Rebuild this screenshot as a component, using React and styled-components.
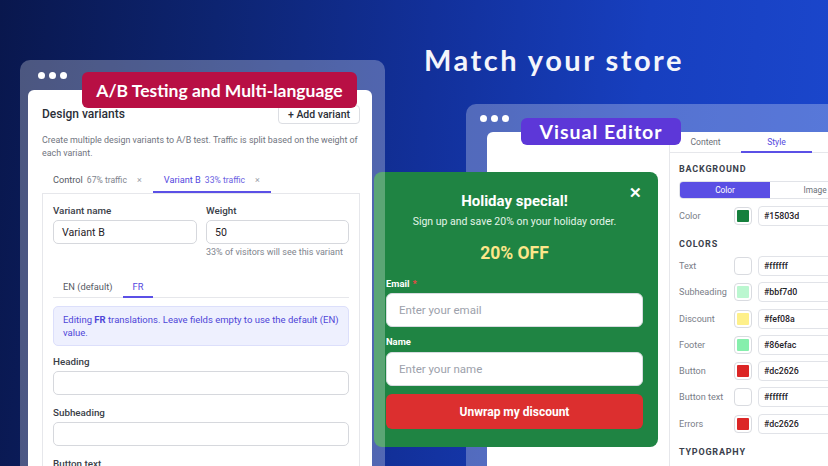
import React from "react";
import styled, { createGlobalStyle } from "styled-components";

const Global = createGlobalStyle`
  * { box-sizing: border-box; }
  html, body { margin: 0; padding: 0; }
  body { width: 828px; height: 466px; overflow: hidden; font-family: Roboto, "Liberation Sans", sans-serif; }
`;

const Stage = styled.div`
  position: relative;
  width: 828px;
  height: 466px;
  overflow: hidden;
  background: linear-gradient(95deg, #09174d 0%, #0d2471 25%, #12309a 50%, #173fbf 75%, #1b47cd 100%);
`;

const Title = styled.h1`
  position: absolute;
  left: 424px;
  top: 40px;
  margin: 0;
  color: #f4f5fb;
  font-family: Lato, "Noto Sans", sans-serif;
  font-weight: 700;
  font-size: 29px;
  line-height: 40px;
  letter-spacing: 2.5px;
  white-space: nowrap;
`;

const Frame = styled.div`
  position: absolute;
  left: ${(p) => p.$left}px;
  top: ${(p) => p.$top}px;
  width: ${(p) => p.$width}px;
  height: ${(p) => p.$height}px;
  border-radius: 10px;
  background: rgba(255, 255, 255, 0.27);
  padding: ${(p) => p.$pad};
  display: flex;
  flex-direction: column;
  z-index: ${(p) => p.$z};
`;

const Dots = styled.div`
  display: flex;
  gap: ${(p) => p.$gap}px;
  height: ${(p) => p.$h}px;
  align-items: center;
  padding-left: ${(p) => p.$pl}px;
  span {
    width: ${(p) => p.$d}px;
    height: ${(p) => p.$d}px;
    border-radius: 50%;
    background: #fff;
  }
`;

const WhiteBody = styled.div`
  flex: 1;
  background: #fff;
  border-radius: 6px 6px 0 0;
  overflow: hidden;
  margin-left: ${(p) => p.$ml}px;
  display: ${(p) => (p.$row ? "flex" : "block")};
`;

const Badge = styled.div`
  position: absolute;
  left: ${(p) => p.$left}px;
  top: ${(p) => p.$top}px;
  width: ${(p) => p.$width}px;
  height: ${(p) => p.$height}px;
  background: ${(p) => p.$bg};
  border-radius: 6px;
  color: #fff;
  font-family: Lato, "Noto Sans", sans-serif;
  font-weight: 700;
  font-size: ${(p) => p.$fs}px;
  letter-spacing: ${(p) => p.$ls}px;
  white-space: nowrap;
  display: flex;
  align-items: center;
  justify-content: center;
  z-index: 10;
`;

/* ---------- Left panel ---------- */
const Panel = styled.div`
  padding: 14px 13px 0 14px;
`;

const HeaderRow = styled.div`
  display: flex;
  justify-content: space-between;
  align-items: center;
  height: 20px;
`;

const PanelTitle = styled.div`
  font-size: 12px;
  font-weight: 500;
  color: #2b2f38;
`;

const GhostButton = styled.div`
  height: 19px;
  padding: 0 9px;
  border: 1px solid #dcdee3;
  border-radius: 4px;
  font-size: 10.5px;
  font-weight: 500;
  color: #2b2f38;
  display: flex;
  align-items: center;
  margin-right: -1px;
`;

const Desc = styled.p`
  margin: 10px -5px 0 0;
  font-size: 8.9px;
  line-height: 12.5px;
  color: #70747e;
`;

const Tabs = styled.div`
  display: flex;
  margin-top: 9px;
  height: 25px;
`;

const Tab = styled.div`
  display: flex;
  align-items: center;
  gap: 4px;
  padding: 0 11px;
  font-size: 9.2px;
  color: ${(p) => (p.$active ? "#5548e0" : "#565a64")};
  border-bottom: 2px solid ${(p) => (p.$active ? "#5b50e6" : "transparent")};
  small {
    font-size: 8.6px;
    color: ${(p) => (p.$active ? "#6a60e2" : "#80848d")};
  }
  i {
    font-style: normal;
    font-size: 9px;
    color: #9a9ea7;
    margin-left: 6px;
  }
`;

const Card = styled.div`
  border: 1px solid #e6e7eb;
  border-bottom: none;
  padding: 10px 10px 0;
  margin-right: -1px;
`;

const TwoCol = styled.div`
  display: grid;
  grid-template-columns: 144px 143px;
  gap: 9px;
`;

const Field = styled.div`
  display: flex;
  flex-direction: column;
  margin-top: ${(p) => p.$mt || 0}px;
`;

const Label = styled.label`
  font-size: 9.8px;
  font-weight: 500;
  color: #3a3e48;
  line-height: 13px;
  margin-bottom: 3px;
`;

const Input = styled.div`
  height: 24px;
  border: 1px solid #d6d8dd;
  border-radius: 5px;
  padding: 0 8px;
  font-size: 10.6px;
  color: #1f2228;
  display: flex;
  align-items: center;
`;

const Help = styled.div`
  font-size: 9px;
  color: #80848d;
  margin-top: 3px;
  white-space: nowrap;
`;

const LangTabs = styled.div`
  display: flex;
  margin-top: 19px;
  height: 22px;
  border-bottom: 1px solid #e6e7eb;
`;

const LangTab = styled.div`
  padding: 0 10px;
  display: flex;
  align-items: center;
  font-size: 9.3px;
  color: ${(p) => (p.$active ? "#5548e0" : "#565a64")};
  border-bottom: 2px solid ${(p) => (p.$active ? "#5b50e6" : "transparent")};
  margin-bottom: -1px;
`;

const Info = styled.div`
  margin-top: 8px;
  background: #eef0fe;
  border: 1px solid #dcdffb;
  border-radius: 5px;
  padding: 6px 5px 6px 9px;
  font-size: 9.5px;
  line-height: 13px;
  color: #4f46d8;
  b { font-weight: 700; }
`;

/* ---------- Right editor ---------- */
const Canvas = styled.div`
  width: 182px;
  flex: none;
`;

const Sidebar = styled.div`
  flex: none;
  width: 175px;
  border-left: 1px solid #e6e7eb;
`;

const SideTabs = styled.div`
  display: flex;
  height: 21px;
  border-bottom: 1px solid #e6e7eb;
`;

const SideTab = styled.div`
  width: 71px;
  display: flex;
  align-items: center;
  justify-content: center;
  font-size: 8.6px;
  color: ${(p) => (p.$active ? "#5548e0" : "#6b6f78")};
  border-bottom: 2px solid ${(p) => (p.$active ? "#5b50e6" : "transparent")};
  margin-bottom: -1px;
`;

const SideBody = styled.div`
  padding: 0 0 0 9px;
`;

const SectionHead = styled.div`
  margin-top: ${(p) => p.$mt}px;
  font-size: 9px;
  font-weight: 700;
  letter-spacing: 0.8px;
  color: #3b3f4c;
  line-height: 12px;
`;

const Segmented = styled.div`
  margin-top: 6px;
  display: flex;
  height: 18px;
  width: 190px;
  border: 1px solid #e1e3e8;
  border-radius: 4px;
  overflow: hidden;
`;

const Seg = styled.div`
  width: 90px;
  flex: none;
  display: flex;
  align-items: center;
  justify-content: center;
  font-size: 8.3px;
  background: ${(p) => (p.$active ? "#5a4fe4" : "#fff")};
  color: ${(p) => (p.$active ? "#fff" : "#6b6f78")};
`;

const ColorRows = styled.div`
  margin-top: ${(p) => p.$mt}px;
  display: grid;
  grid-auto-rows: 20px;
  row-gap: 6.3px;
`;

const ColorRow = styled.div`
  display: grid;
  grid-template-columns: 49px 18px 90px;
  column-gap: 6px;
  align-items: center;
`;

const ColorLabel = styled.span`
  font-size: 9.1px;
  color: #7a7e88;
  white-space: nowrap;
`;

const Swatch = styled.span`
  width: 18px;
  height: 18px;
  border: 1px solid #d9dbe0;
  border-radius: 4px;
  padding: 2px;
  display: flex;
  span {
    flex: 1;
    border-radius: 1px;
    background: ${(p) => p.$c};
  }
`;

const HexInput = styled.span`
  height: 20px;
  border: 1px solid #e1e3e8;
  border-radius: 4px;
  padding: 0 5px;
  font-size: 8.8px;
  font-weight: 500;
  color: #1f2228;
  display: flex;
  align-items: center;
`;

/* ---------- Popup ---------- */
const Popup = styled.div`
  position: absolute;
  left: 374px;
  top: 172px;
  width: 284px;
  height: 275px;
  background: #1f8443;
  border-radius: 8px;
  padding: 20px 15px 0 12px;
  display: flex;
  flex-direction: column;
  z-index: 5;
  color: #fff;
`;

const Close = styled.div`
  position: absolute;
  right: 16px;
  top: 12px;
  font-size: 15px;
  font-weight: 700;
  line-height: 18px;
`;

const PopTitle = styled.div`
  text-align: center;
  font-size: 15px;
  font-weight: 700;
  line-height: 18px;
`;

const PopSub = styled.div`
  text-align: center;
  font-size: 10.5px;
  line-height: 14px;
  margin-top: 5px;
  color: #e3f4e8;
`;

const PopDiscount = styled.div`
  text-align: center;
  font-size: 17.5px;
  font-weight: 700;
  line-height: 22px;
  margin-top: 13px;
  color: #fde68a;
`;

const PopLabel = styled.div`
  font-size: 9.4px;
  font-weight: 700;
  line-height: 12px;
  margin-top: ${(p) => p.$mt}px;
  span { color: #ef4444; margin-left: 3px; }
`;

const PopInput = styled.div`
  margin-top: ${(p) => p.$mt}px;
  height: 34px;
  background: #fff;
  border: 1px solid #d7dbe0;
  border-radius: 6px;
  padding: 0 12px;
  display: flex;
  align-items: center;
  font-size: 11.5px;
  color: #9ca1ab;
`;

const PopButton = styled.div`
  margin-top: 8px;
  height: 35px;
  background: #dc2f2f;
  border-radius: 6px;
  display: flex;
  align-items: center;
  justify-content: center;
  font-size: 12px;
  font-weight: 700;
`;

const colors = [
  ["Text", "#ffffff"],
  ["Subheading", "#bbf7d0"],
  ["Discount", "#fef08a"],
  ["Footer", "#86efac"],
  ["Button", "#dc2626"],
  ["Button text", "#ffffff"],
  ["Errors", "#dc2626"],
];

export default function App() {
  return (
    <Stage>
      <Global />
      <Title>Match your store</Title>

      <Frame $left={466} $top={104} $width={400} $height={400} $pad="0" $z={1}>
        <Dots $gap={4} $h={28} $pl={14} $d={7}>
          <span />
          <span />
          <span />
        </Dots>
        <WhiteBody $ml={21} $row>
          <Canvas />
          <Sidebar>
            <SideTabs>
              <SideTab>Content</SideTab>
              <SideTab $active>Style</SideTab>
            </SideTabs>
            <SideBody>
              <SectionHead $mt={10}>BACKGROUND</SectionHead>
              <Segmented>
                <Seg $active>Color</Seg>
                <Seg>Image</Seg>
              </Segmented>
              <ColorRows $mt={7}>
                <ColorRow>
                  <ColorLabel>Color</ColorLabel>
                  <Swatch $c="#15803d">
                    <span />
                  </Swatch>
                  <HexInput>#15803d</HexInput>
                </ColorRow>
              </ColorRows>
              <SectionHead $mt={12}>COLORS</SectionHead>
              <ColorRows $mt={6}>
                {colors.map(([l, c]) => (
                  <ColorRow key={l}>
                    <ColorLabel>{l}</ColorLabel>
                    <Swatch $c={c}>
                      <span />
                    </Swatch>
                    <HexInput>{c}</HexInput>
                  </ColorRow>
                ))}
              </ColorRows>
              <SectionHead $mt={12}>TYPOGRAPHY</SectionHead>
            </SideBody>
          </Sidebar>
        </WhiteBody>
      </Frame>
      <Badge $left={521} $top={118} $width={160} $height={27} $bg="#5d37d8" $fs={19.5} $ls={1}>
        Visual Editor
      </Badge>

      <Popup>
        <Close>✕</Close>
        <PopTitle>Holiday special!</PopTitle>
        <PopSub>Sign up and save 20% on your holiday order.</PopSub>
        <PopDiscount>20% OFF</PopDiscount>
        <PopLabel $mt={14}>
          Email<span>*</span>
        </PopLabel>
        <PopInput $mt={3}>Enter your email</PopInput>
        <PopLabel $mt={9}>Name</PopLabel>
        <PopInput $mt={4}>Enter your name</PopInput>
        <PopButton>Unwrap my discount</PopButton>
      </Popup>

      <Frame $left={20} $top={60} $width={365} $height={420} $pad="0 13px 0 8px" $z={8}>
        <Dots $gap={4} $h={30} $pl={10} $d={7}>
          <span />
          <span />
          <span />
        </Dots>
        <WhiteBody $ml={0}>
          <Panel>
            <HeaderRow>
              <PanelTitle>Design variants</PanelTitle>
              <GhostButton>+ Add variant</GhostButton>
            </HeaderRow>
            <Desc>
              Create multiple design variants to A/B test. Traffic is split based on the weight of
              each variant.
            </Desc>
            <Tabs>
              <Tab>
                Control <small>67% traffic</small>
                <i>×</i>
              </Tab>
              <Tab $active>
                Variant B <small>33% traffic</small>
                <i>×</i>
              </Tab>
            </Tabs>
            <Card>
              <TwoCol>
                <Field>
                  <Label>Variant name</Label>
                  <Input>Variant B</Input>
                </Field>
                <Field>
                  <Label>Weight</Label>
                  <Input>50</Input>
                  <Help>33% of visitors will see this variant</Help>
                </Field>
              </TwoCol>
              <LangTabs>
                <LangTab>EN (default)</LangTab>
                <LangTab $active>FR</LangTab>
              </LangTabs>
              <Info>
                Editing <b>FR</b> translations. Leave fields empty to use the default (EN) value.
              </Info>
              <Field $mt={9}>
                <Label>Heading</Label>
                <Input />
              </Field>
              <Field $mt={11}>
                <Label>Subheading</Label>
                <Input />
              </Field>
              <Field $mt={11}>
                <Label>Button text</Label>
              </Field>
            </Card>
          </Panel>
        </WhiteBody>
      </Frame>
      <Badge $left={82} $top={72} $width={275} $height={36} $bg="#b80f44" $fs={17.5} $ls={0}>
        A/B Testing and Multi-language
      </Badge>
    </Stage>
  );
}
